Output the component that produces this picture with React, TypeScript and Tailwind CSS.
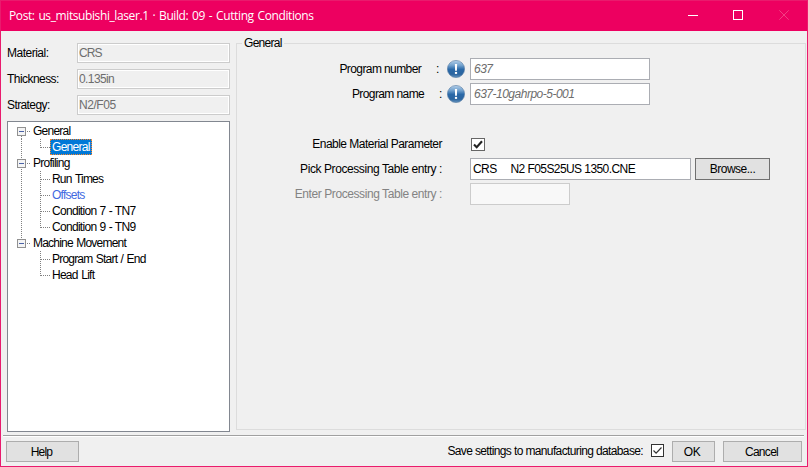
import type { ReactNode } from 'react';

function Field({ label, value, tracking, valueTracking = '' }: { label: string; value: string; tracking: string; valueTracking?: string }) {
  return (
    <div className="flex h-5 items-center">
      <span className={`w-[70px] ${tracking}`}>{label}</span>
      <div className="flex h-5 w-[153px] items-center border border-[#cccccc] pl-px outline-1 -outline-offset-2 outline-white">
        <span className={`text-[#6d6d6d] ${valueTracking}`}>{value}</span>
      </div>
    </div>
  );
}

function Expander() {
  return (
    <svg className="block h-4 w-4 shrink-0" viewBox="0 0 16 16" shapeRendering="crispEdges">
      <path d="M10 8.5h4" stroke="#808080" strokeDasharray="1 1" />
      <rect x="0.5" y="4.5" width="8" height="8" fill="#f4f4f4" stroke="#919191" />
      <path d="M2 8.5h5" stroke="#4b63a7" />
    </svg>
  );
}

function Parent({ children, tracking, line = '' }: { children: ReactNode; tracking: string; line?: string }) {
  return (
    <div className="flex h-4 items-center">
      <svg className="-mr-4 block h-4 w-4 shrink-0" viewBox="0 0 16 16" shapeRendering="crispEdges">
        <path d={line} stroke="#808080" strokeDasharray="1 1" />
      </svg>
      <Expander />
      <span className={tracking}>{children}</span>
    </div>
  );
}

function Child({ children, last = false, trunk = true, className = '' }: { children: ReactNode; last?: boolean; trunk?: boolean; className?: string }) {
  return (
    <div className="flex h-4 items-center">
      <svg className="block h-4 w-[33px] shrink-0" viewBox="0 0 33 16" shapeRendering="crispEdges" stroke="#808080" strokeDasharray="1 1">
        {trunk && <path d="M4.5 0v16" />}
        <path d={last ? 'M23.5 0v9' : 'M23.5 0v16'} />
        <path d="M24 8.5h9" />
      </svg>
      <span className={`flex h-4 items-center border px-px ${className}`}>{children}</span>
    </div>
  );
}

function InfoIcon() {
  return (
    <svg className="block h-[18px] w-[18px]" viewBox="0 0 18 18">
      <defs>
        <linearGradient id="ball" x1="0" y1="0" x2="0" y2="1">
          <stop offset="0" stopColor="#b4d0ea" />
          <stop offset="0.3" stopColor="#6f9fcc" />
          <stop offset="0.52" stopColor="#2a69a8" />
          <stop offset="0.8" stopColor="#2b659f" />
          <stop offset="1" stopColor="#6795bf" />
        </linearGradient>
      </defs>
      <circle cx="9" cy="9" r="8.6" fill="url(#ball)" stroke="#547ba3" strokeWidth="0.6" />
      <path d="M7.9 4h2.2l-.2 6.8H8.1z" fill="#fff" />
      <path d="M7.9 11.9h2.2v2H7.9z" fill="#fff" />
    </svg>
  );
}

function Button({ children, className }: { children: ReactNode; className: string }) {
  return <button className={`flex items-center justify-center border bg-[#e1e1e1] ${className}`}>{children}</button>;
}

export default function App() {
  return (
    <div className="flex h-[467px] w-[808px] flex-col overflow-hidden border border-[#e91b6d] bg-[#f0f0f0] font-['Liberation_Sans',Arial,sans-serif] text-[12px] leading-4 tracking-[-0.45px] whitespace-pre text-black">
      <header className="flex h-[30px] shrink-0 items-center bg-[#ed0060] pl-2 text-white">
        <span className="flex-1 font-['Open_Sans','Noto_Sans',sans-serif] text-[12px] tracking-[-0.4px] [word-spacing:1.1px]">Post: us_mitsubishi_laser.1 · Build: 09 - Cutting Conditions</span>
        <svg className="block h-[30px] w-[138px]" viewBox="669 1 138 30" fill="none" stroke="#fff">
          <path d="M688 15.5h10" shapeRendering="crispEdges" />
          <path d="M733.5 10.5h9v9h-9z" shapeRendering="crispEdges" />
          <path d="M779.3 10.3l9.4 9.4M788.7 10.3l-9.4 9.4" stroke="#f23f83" />
        </svg>
      </header>

      <main className="flex h-[404px] shrink-0">
        <aside className="flex w-[229px] flex-col gap-1.5 pt-3 pl-1.5">
          <Field label="Material:" value="CRS" tracking="tracking-[-0.5px]" valueTracking="tracking-[-0.9px]" />
          <Field label="Thickness:" value="0.135in" tracking="tracking-[-0.55px]" valueTracking="tracking-[-0.6px]" />
          <Field label="Strategy:" value="N2/F05" tracking="tracking-[-0.6px]" />
          <div className="h-[311px] w-[223px] border border-[#828790] bg-white pt-px pl-[9px]">
            <Parent tracking="tracking-[-0.75px]" line="M4.5 13v3">General</Parent>
            <Child last className="border-dotted border-[#ff8728] bg-[#0078d7] text-white tracking-[-0.7px]">General</Child>
            <Parent tracking="tracking-[-0.75px]" line="M4.5 0v16">Profiling</Parent>
            <Child className="border-transparent tracking-[-0.8px] [word-spacing:1px]">Run Times</Child>
            <Child className="border-transparent text-[#4169e1] tracking-[-0.75px]">Offsets</Child>
            <Child className="border-transparent tracking-[-0.7px] [word-spacing:0.5px]">Condition 7 - TN7</Child>
            <Child last className="border-transparent tracking-[-0.7px] [word-spacing:0.5px]">Condition 9 - TN9</Child>
            <Parent tracking="tracking-[-0.8px] [word-spacing:1px]" line="M4.5 0v4">Machine Movement</Parent>
            <Child trunk={false} className="border-transparent tracking-[-0.8px] [word-spacing:0.9px]">Program Start / End</Child>
            <Child trunk={false} last className="border-transparent tracking-[-0.75px] [word-spacing:1px]">Head Lift</Child>
          </div>
        </aside>

        <fieldset className="mt-1 ml-1.5 h-[395px] w-[570px] border border-[#dcdcdc]">
          <legend className="ml-[5px] h-4 w-[42px] px-0.5 tracking-[-0.7px]">General</legend>
          <div className="-ml-px grid grid-cols-[206px_28px_300px] gap-y-[3px] pt-[7px]">
            <div className="flex h-[22px] items-center justify-end gap-[15px] pr-[3px]"><span className="tracking-[-0.6px]">Program number</span><span>:</span></div>
            <div className="flex items-center pl-[5px]"><InfoIcon /></div>
            <div className="flex w-[180px] items-center border border-[#abadb3] bg-white pl-[3px] text-[#6d6d6d] italic tracking-[-0.5px]">637</div>

            <div className="flex h-[22px] items-center justify-end gap-[15px]"><span className="tracking-[-0.6px]">Program name</span><span>:</span></div>
            <div className="flex items-center pl-[5px]"><InfoIcon /></div>
            <div className="flex w-[180px] items-center border border-[#abadb3] bg-white pl-[3px] text-[#6d6d6d] italic tracking-[-0.5px]">637-10gahrpo-5-001</div>

            <div className="col-span-3 h-[22px]" />

            <div className="flex h-[22px] items-center justify-end tracking-[-0.52px]"><span>Enable Material Parameter</span></div>
            <div />
            <div className="flex items-center pl-px">
              <svg className="block h-[13px] w-[14px]" viewBox="0 0 14 13">
                <rect x="0.5" y="0.5" width="13" height="12" fill="#fff" stroke="#666" />
                <path d="M3 6.5l2.7 2.8L11 3.2" fill="none" stroke="#222" strokeWidth="2.1" />
              </svg>
            </div>

            <div className="flex h-[22px] items-center justify-end tracking-[-0.41px]"><span>Pick Processing Table entry :</span></div>
            <div />
            <div className="flex gap-1">
              <div className="flex w-[221px] items-center border border-[#abadb3] bg-white pl-0.5 tracking-[-0.57px]">CRS     N2 F05S25US 1350.CNE</div>
              <Button className="w-[75px] border-[#707070] tracking-[-0.5px]">Browse...</Button>
            </div>

            <div className="flex h-[22px] items-center justify-end text-[#838383] tracking-[-0.42px]"><span>Enter Processing Table entry :</span></div>
            <div />
            <div className="w-[100px] border border-[#cccccc] bg-[#f8f8f8]" />
          </div>
        </fieldset>
      </main>

      <footer className="mr-[3px] ml-0.5 flex h-[31px] shrink-0 items-start border-t border-[#a0a0a0] pt-[5px] pl-[3px] shadow-[inset_0_1px_0_#fff]">
        <Button className="h-[21px] w-[73px] border-[#adadad] pr-0.5 tracking-[-0.8px]">Help</Button>
        <span className="ml-auto flex h-5 items-center tracking-[-0.63px]">Save settings to manufacturing database:</span>
        <svg className="mt-[3px] mr-2 ml-2 block h-[13px] w-[13px]" viewBox="0 0 13 13">
          <rect x="0.5" y="0.5" width="12" height="12" fill="#fff" stroke="#333" />
          <path d="M2.5 6.5l2.6 2.7 5.4-5.7" fill="none" stroke="#333" strokeWidth="1.2" />
        </svg>
        <Button className="mr-2 h-[21px] w-[43px] border-[#adadad] pr-[3px]">OK</Button>
        <Button className="mr-0.5 h-[21px] w-[79px] border-[#adadad] pr-0.5 tracking-[-0.7px]">Cancel</Button>
      </footer>
    </div>
  );
}
